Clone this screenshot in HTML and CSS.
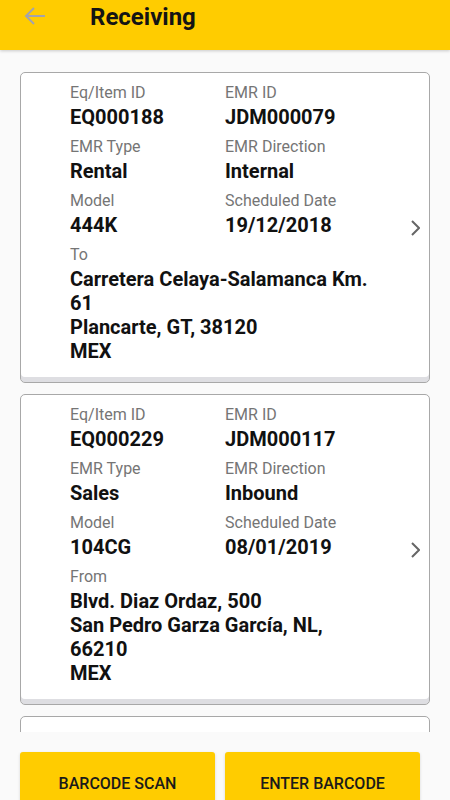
FILE: index.html
```html
<!DOCTYPE html>
<html>
<head>
    <meta charset="utf-8" />
    <title>Receiving</title>
    <link rel="stylesheet" href="styles.css">
</head>
<body>
    <div id="app">
        <div class="fejlec">
            <svg class="vissza" width="22" height="20" viewBox="0 0 22 20">
                <path d="M21 10H3M10 2L2 10l8 8" fill="none" stroke="#a3a3ad" stroke-width="2" />
            </svg>
            <h1 class="cim">Receiving</h1>
        </div>

        <div class="lista">
            <div class="kartya">
                <div class="adatok">
                    <div class="mezo">
                        <div class="cimke">Eq/Item ID</div>
                        <div class="ertek">EQ000188</div>
                    </div>
                    <div class="mezo">
                        <div class="cimke">EMR ID</div>
                        <div class="ertek">JDM000079</div>
                    </div>
                    <div class="mezo">
                        <div class="cimke">EMR Type</div>
                        <div class="ertek">Rental</div>
                    </div>
                    <div class="mezo">
                        <div class="cimke">EMR Direction</div>
                        <div class="ertek">Internal</div>
                    </div>
                    <div class="mezo">
                        <div class="cimke">Model</div>
                        <div class="ertek">444K</div>
                    </div>
                    <div class="mezo">
                        <div class="cimke">Scheduled Date</div>
                        <div class="ertek">19/12/2018</div>
                    </div>
                    <div class="mezo szeles">
                        <div class="cimke">To</div>
                        <div class="cim-sor">Carretera Celaya-Salamanca Km.<br>61<br>Plancarte, GT, 38120<br>MEX</div>
                    </div>
                </div>
                <svg class="nyil" width="10" height="16" viewBox="0 0 10 16">
                    <path d="M2 1l7 7-7 7" fill="none" stroke="#666" stroke-width="2" />
                </svg>
            </div>

            <div class="kartya">
                <div class="adatok">
                    <div class="mezo">
                        <div class="cimke">Eq/Item ID</div>
                        <div class="ertek">EQ000229</div>
                    </div>
                    <div class="mezo">
                        <div class="cimke">EMR ID</div>
                        <div class="ertek">JDM000117</div>
                    </div>
                    <div class="mezo">
                        <div class="cimke">EMR Type</div>
                        <div class="ertek">Sales</div>
                    </div>
                    <div class="mezo">
                        <div class="cimke">EMR Direction</div>
                        <div class="ertek">Inbound</div>
                    </div>
                    <div class="mezo">
                        <div class="cimke">Model</div>
                        <div class="ertek">104CG</div>
                    </div>
                    <div class="mezo">
                        <div class="cimke">Scheduled Date</div>
                        <div class="ertek">08/01/2019</div>
                    </div>
                    <div class="mezo szeles">
                        <div class="cimke">From</div>
                        <div class="cim-sor">Blvd. Diaz Ordaz, 500<br>San Pedro Garza García, NL,<br>66210<br>MEX</div>
                    </div>
                </div>
                <svg class="nyil" width="10" height="16" viewBox="0 0 10 16">
                    <path d="M2 1l7 7-7 7" fill="none" stroke="#666" stroke-width="2" />
                </svg>
            </div>

            <div class="kartya ures"></div>
        </div>

        <div class="gombok">
            <button class="gomb" type="button">Barcode Scan</button>
            <button class="gomb" type="button">Enter Barcode</button>
        </div>
    </div>
</body>
</html>
```

FILE: styles.css
```css
html, body {
    margin: 0;
    padding: 0;
}
body {
    background-color: #fafafa;
    font-family: Roboto, "Liberation Sans", sans-serif;
    color: #111;
}
#app {
    width: 450px;
    height: 800px;
    display: flex;
    flex-direction: column;
    overflow: hidden;
}
.fejlec {
    height: 50px;
    flex: none;
    background-color: #ffcc00;
    box-shadow: 0 1px 3px rgba(0, 0, 0, 0.2);
    display: flex;
    align-items: flex-start;
    position: relative;
    z-index: 1;
}
.vissza {
    margin: 6px 0 0 24px;
}
.cim {
    margin: 0 0 0 44px;
    padding-top: 2px;
    font-size: 24px;
    line-height: 30px;
    font-weight: 700;
    color: #141414;
}
.lista {
    height: 682px;
    flex: none;
    overflow: hidden;
    padding: 22px 20px 0 20px;
    box-sizing: border-box;
}
.kartya {
    display: flex;
    align-items: center;
    background-color: #fff;
    border: 1px solid #a8a8a8;
    border-radius: 5px;
    box-shadow: inset 0 -5px 0 #dedee2;
    padding: 9px 0 19px 49px;
    margin-bottom: 11px;
}
.ures {
    height: 60px;
}
.adatok {
    flex: 1;
    display: grid;
    grid-template-columns: 155px 1fr;
    row-gap: 6px;
}
.szeles {
    grid-column: 1 / 3;
}
.cimke {
    font-size: 16px;
    line-height: 22px;
    color: #757575;
}
.ertek {
    font-size: 20px;
    line-height: 26px;
    font-weight: 700;
}
.cim-sor {
    font-size: 20px;
    line-height: 24px;
    font-weight: 700;
    margin-top: 1px;
}
.nyil {
    flex: none;
    margin: 10px 9px 0 0;
}
.gombok {
    flex: none;
    display: flex;
    gap: 10px;
    padding: 20px 30px 0 20px;
}
.gomb {
    flex: 1;
    height: 62px;
    border: none;
    border-radius: 3px;
    background-color: #ffcc00;
    box-shadow: 0 1px 3px rgba(0, 0, 0, 0.15);
    font-family: Roboto, "Liberation Sans", sans-serif;
    font-size: 16px;
    font-weight: 500;
    text-transform: uppercase;
    color: #1a1a1a;
    padding: 0;
}
```
